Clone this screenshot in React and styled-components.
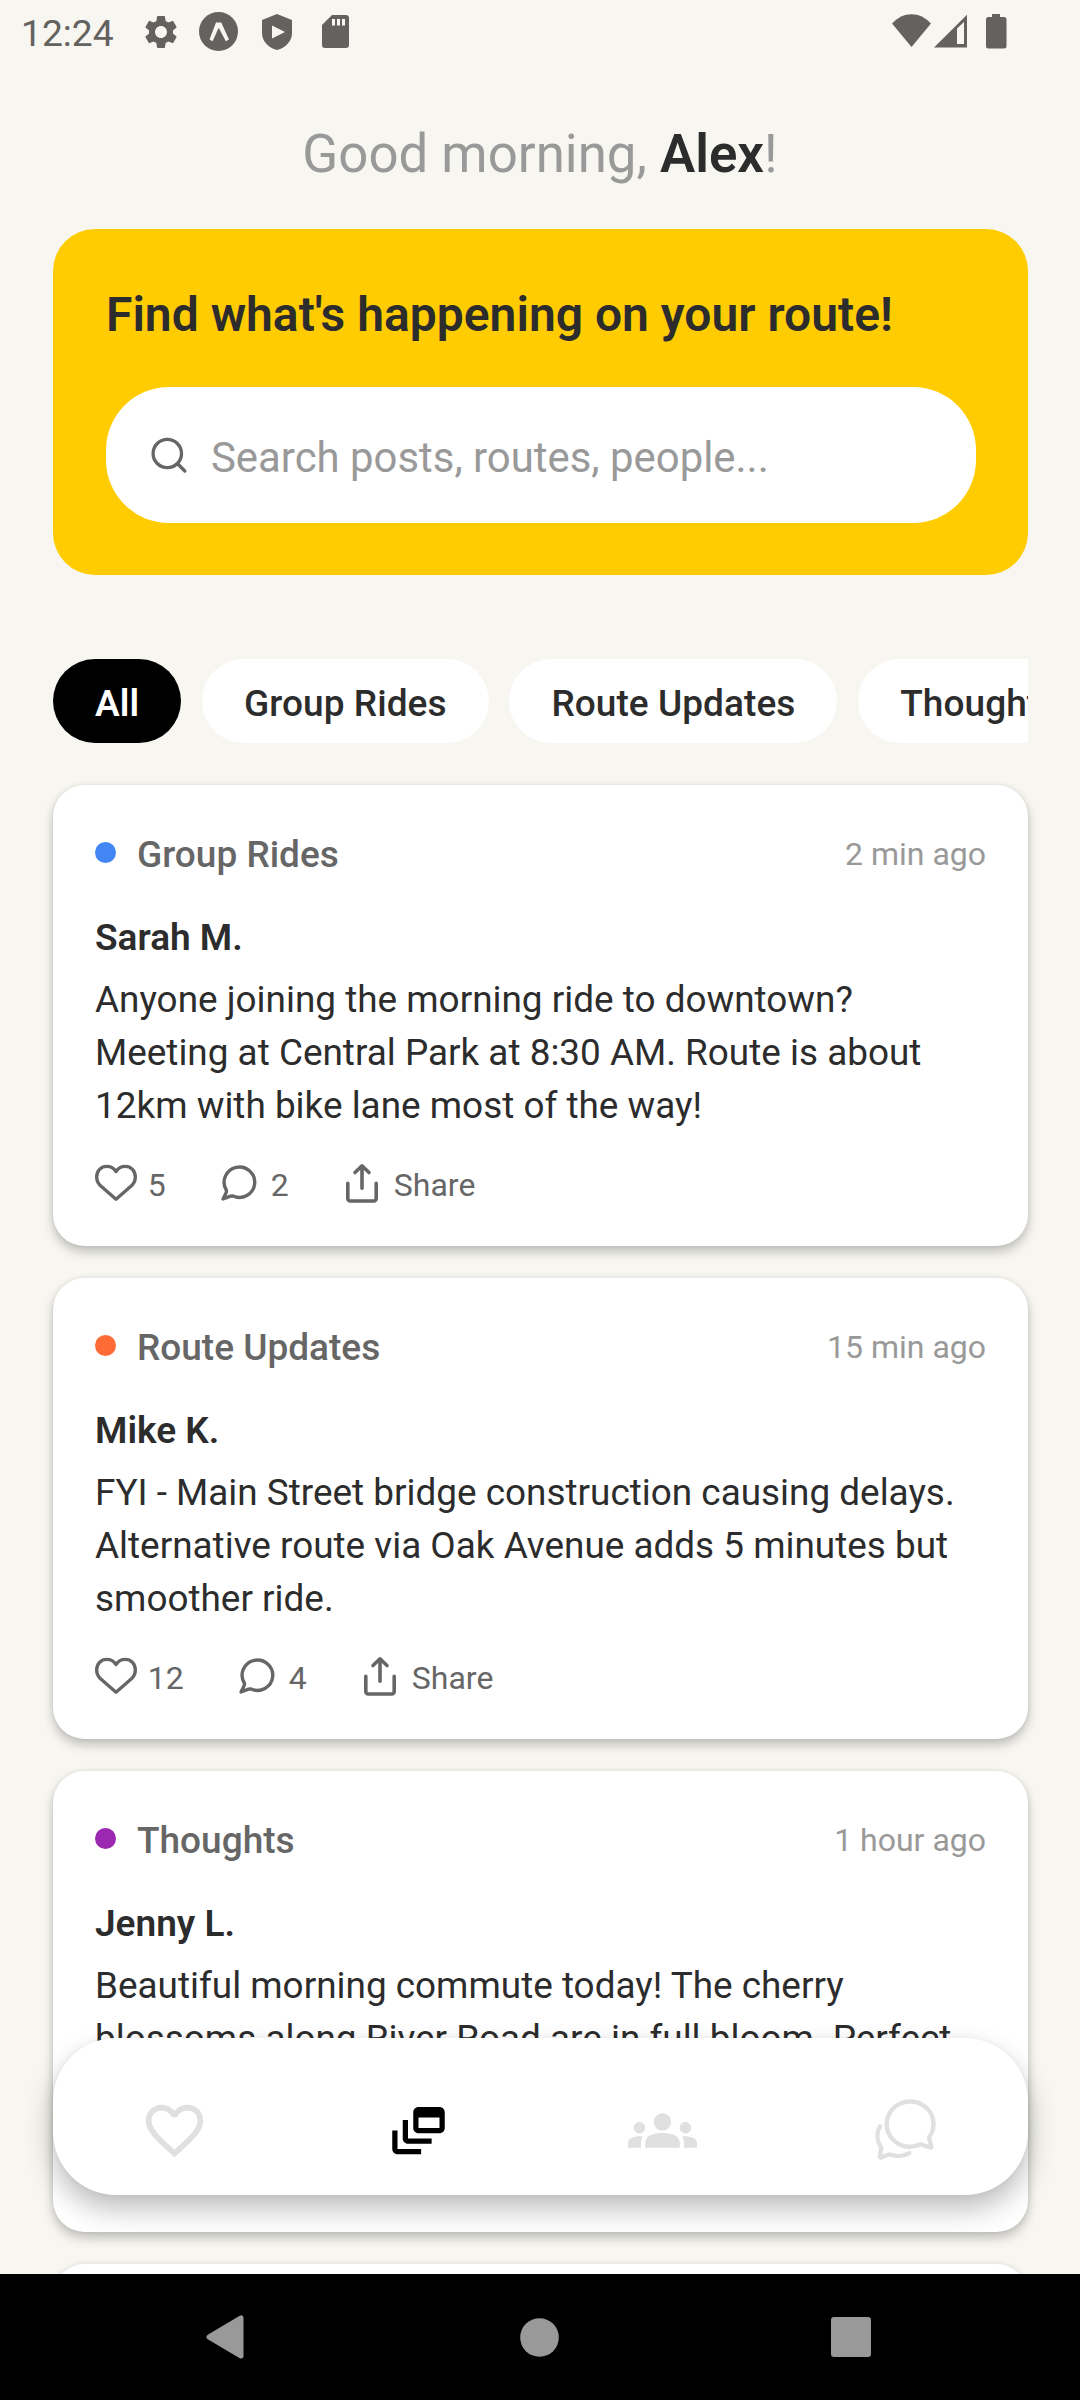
import React from "react";
import styled, { createGlobalStyle } from "styled-components";
import { MdSettings, MdDynamicFeed, MdGroups, MdFavoriteBorder } from "react-icons/md";
import { IoChatbubblesOutline } from "react-icons/io5";

const GlobalStyle = createGlobalStyle`
  * { box-sizing: border-box; }
  html, body { margin: 0; padding: 0; }
  body {
    width: 1080px;
    background: #f7f6f1;
    font-family: Roboto, "Noto Sans", sans-serif;
    -webkit-font-smoothing: antialiased;
  }
`;

const Screen = styled.div`
  position: relative;
  width: 1080px;
  height: 2400px;
  overflow: hidden;
  display: flex;
  flex-direction: column;
  background: #f7f6f1;
`;

const StatusBar = styled.header`
  flex: none;
  height: 63px;
  display: flex;
  align-items: center;
  justify-content: space-between;
  padding: 0 73px 0 21px;
  color: #63625f;
`;

const StatusGroup = styled.div`
  display: flex;
  align-items: center;
`;

const Clock = styled.span`
  width: 118px;
  font-size: 37.2px;
  line-height: 43px;
  padding-top: 4px;
`;

const StatusIcon = styled.span`
  display: flex;
  margin-left: ${(p) => p.$gap || 0}px;
  svg { display: block; }
`;

const Content = styled.main`
  flex: 1;
  min-height: 0;
  overflow: hidden;
  padding: 0 52px 0 53px;
  display: flex;
  flex-direction: column;
`;

const Greeting = styled.h1`
  flex: none;
  margin: 60px 0 44px;
  padding-right: 1px;
  font-size: 52.8px;
  line-height: 62px;
  font-weight: 400;
  text-align: center;
  color: #999;
  strong { font-weight: 600; color: #2c2c2c; }
`;

const Hero = styled.section`
  flex: none;
  height: 346px;
  padding: 52.5px 52px 52.5px 53px;
  border-radius: 42px;
  background: #ffcc02;
`;

const HeroTitle = styled.h2`
  margin: 5px 0 44.5px;
  font-size: 48px;
  line-height: 56px;
  font-weight: 600;
  color: #2c2c2c;
  white-space: nowrap;
`;

const SearchField = styled.div`
  height: 136px;
  display: flex;
  align-items: center;
  gap: 21px;
  padding: 0 42px;
  border-radius: 63px;
  background: #fff;
  color: #666;
  svg { display: block; flex: none; }
`;

const Placeholder = styled.span`
  font-size: 41.9px;
  line-height: 50px;
  padding-top: 6px;
  color: #999;
`;

const ChipRow = styled.nav`
  flex: none;
  display: flex;
  gap: 20.7px;
  margin: 84px 0 42px;
  overflow: hidden;
`;

const Chip = styled.button`
  flex: none;
  height: 84px;
  padding: 4px 42.1px 0;
  border: 0;
  border-radius: 42px;
  font: ${(p) => (p.$active ? 600 : 500)} 37px/43px Roboto, sans-serif;
  letter-spacing: 0.06px;
  color: ${(p) => (p.$active ? "#fff" : "#2c2c2c")};
  background: ${(p) => (p.$active ? "#000" : "#fff")};
`;

const Feed = styled.div`
  flex: none;
  display: flex;
  flex-direction: column;
  gap: 32px;
`;

const Card = styled.article`
  height: 461px;
  padding: 42px;
  border-radius: 31.5px;
  background: #fff;
  box-shadow: 0 6px 11px rgba(0, 0, 0, 0.22), 0 0 5px rgba(0, 0, 0, 0.08);
`;

const CardHead = styled.div`
  height: 53px;
  display: flex;
  align-items: center;
  justify-content: space-between;
`;

const Category = styled.div`
  display: flex;
  align-items: center;
  gap: 21px;
  margin-top: 2px;
  font-size: 37px;
  line-height: 43px;
  font-weight: 500;
  color: #666;
`;

const Dot = styled.span`
  width: 21px;
  height: 21px;
  margin-top: -4px;
  border-radius: 50%;
  background: ${(p) => p.$color};
`;

const Time = styled.time`
  font-size: 32px;
  line-height: 38px;
  color: #999;
`;

const Author = styled.h3`
  margin: 36px 0 14px;
  font-size: 37px;
  line-height: 43px;
  font-weight: 600;
  color: #2c2c2c;
`;

const Message = styled.p`
  margin: 0;
  height: 159px;
  font-size: 36.9px;
  line-height: 53px;
  color: #2c2c2c;
  white-space: pre;
`;

const Actions = styled.div`
  display: flex;
  align-items: center;
  gap: 52.4px;
  margin-top: 30px;
`;

const Action = styled.button`
  display: flex;
  align-items: center;
  gap: 10.7px;
  height: 42px;
  padding: 0;
  border: 0;
  background: none;
  font: 400 32px/37px Roboto, sans-serif;
  color: #666;
  svg { display: block; flex: none; }
  span { padding-top: 5px; }
`;

const TabBar = styled.nav`
  position: absolute;
  left: 53px;
  right: 52px;
  top: 2037.5px;
  height: 157.5px;
  display: grid;
  grid-template-columns: repeat(4, 1fr);
  border-radius: 63px;
  background: #fff;
  box-shadow: 0 14px 28px rgba(0, 0, 0, 0.26), 0 0 6px rgba(0, 0, 0, 0.05);
`;

const Tab = styled.button`
  display: flex;
  align-items: center;
  justify-content: center;
  padding: 28px 0 0;
  border: 0;
  background: none;
  color: ${(p) => (p.$active ? "#000" : "#e0e0e0")};
  svg { display: block; }
  &:last-child { padding: 26px 2px 0 0; }
`;

const SystemNav = styled.footer`
  flex: none;
  height: 126px;
  display: grid;
  grid-template-columns: 1fr 1fr 1fr;
  align-items: center;
  padding: 0 73px;
  background: #000;
  svg { display: block; justify-self: center; }
  svg:first-child { margin-right: 7px; }
`;

const ExpoIcon = () => (
  <svg width="39" height="39" viewBox="0 0 39 39">
    <circle cx="19.5" cy="19.5" r="19.5" fill="#63625f" />
    <path d="M17 10.500h5.200L30 27.500 26.800 29.200 19.700 15.800 13.600 29.200 10.500 27.500z" fill="#f7f6f1" />
  </svg>
);

const ShieldIcon = () => (
  <svg width="30" height="36" viewBox="0 0 30 36">
    <path d="M15 0 30 6v13c0 8-6 14.500-15 17C6 33.500 0 27 0 19V6z" fill="#63625f" />
    <path d="M10 11.500v13L23 18z" fill="#f7f6f1" />
  </svg>
);

const SdIcon = () => (
  <svg width="27" height="33" viewBox="0 0 27 33">
    <path d="M10 0h14a3 3 0 0 1 3 3v27a3 3 0 0 1-3 3H3a3 3 0 0 1-3-3V10z" fill="#63625f" />
    <path d="M10 4h3v6.500h-3zM15 4h3v6.500h-3zM20 4h3v6.500h-3z" fill="#f7f6f1" />
  </svg>
);

const SignalIcons = () => (
  <svg width="115" height="35" viewBox="0 0 115 35">
    <g fill="#63625f">
      <path d="M0 9.500C11-3 28-3 39 9.500L19.500 33z" />
      <path fillRule="evenodd" d="M42 33.500 75 .8v32.700zM65 14.500v15.500h7V8z" />
      <path d="M100 0h8v3h4a2.500 2.500 0 0 1 2.500 2.500V32a2.500 2.500 0 0 1-2.500 2.500H96.500A2.500 2.500 0 0 1 94 32V5.500A2.500 2.500 0 0 1 96.500 3h3.500z" />
    </g>
  </svg>
);

const SearchIcon = () => (
  <svg width="42" height="42" viewBox="0 0 42 42" fill="none" stroke="currentColor" strokeWidth="3.300" strokeLinecap="round">
    <circle cx="19.300" cy="19.500" r="14.200" />
    <path d="M29.800 30l7 7" />
  </svg>
);

const HeartIcon = () => (
  <svg width="42" height="42" viewBox="0 0 42 42" fill="none" stroke="currentColor" strokeWidth="3.300" strokeLinejoin="round">
    <path d="M21 37.200 5 23.300A12 12 0 0 1 1.650 15C1.650 8.700 6 4.300 11.800 4.300c3.800 0 7 1.800 9.200 5.200 2.200-3.400 5.400-5.200 9.200-5.200 5.800 0 10.150 4.400 10.150 10.700A12 12 0 0 1 37 23.300z" />
  </svg>
);

const CommentIcon = () => (
  <svg width="42" height="42" viewBox="0 0 42 42" fill="none" stroke="currentColor" strokeWidth="3.400" strokeLinejoin="round">
    <path d="M8.300 28A15.300 15.200 0 1 1 15 34Q14 33.800 12.500 34.200L5 37 7.800 31.500Q8.800 29.500 8.300 28z" />
  </svg>
);

const ShareIcon = () => (
  <svg width="42" height="42" viewBox="0 0 42 42" fill="none" stroke="currentColor" strokeWidth="3.600" strokeLinecap="round" strokeLinejoin="round">
    <path d="M6.800 21.200v15.300a2.500 2.500 0 0 0 2.500 2.500h23.400a2.500 2.500 0 0 0 2.500-2.500V21.200M21 26.200V4M14 10.500 21 3.800l7 6.700" />
  </svg>
);

const chips = ["All", "Group Rides", "Route Updates", "Thoughts"];

const posts = [
  {
    category: "Group Rides", color: "#4285f4", time: "2 min ago", author: "Sarah M.", likes: 5, comments: 2,
    text: "Anyone joining the morning ride to downtown?\nMeeting at Central Park at 8:30 AM. Route is about\n12km with bike lane most of the way!",
  },
  {
    category: "Route Updates", color: "#ff6b35", time: "15 min ago", author: "Mike K.", likes: 12, comments: 4,
    text: "FYI - Main Street bridge construction causing delays.\nAlternative route via Oak Avenue adds 5 minutes but\nsmoother ride.",
  },
  {
    category: "Thoughts", color: "#9c27b0", time: "1 hour ago", author: "Jenny L.",
    text: "Beautiful morning commute today! The cherry\nblossoms along River Road are in full bloom. Perfect",
  },
];

function Post({ post }) {
  return (
    <Card>
      <CardHead>
        <Category><Dot $color={post.color} />{post.category}</Category>
        <Time>{post.time}</Time>
      </CardHead>
      <Author>{post.author}</Author>
      <Message>{post.text}</Message>
      {post.likes && (
        <Actions>
          <Action><HeartIcon /><span>{post.likes}</span></Action>
          <Action><CommentIcon /><span>{post.comments}</span></Action>
          <Action><ShareIcon /><span>Share</span></Action>
        </Actions>
      )}
    </Card>
  );
}

export default function App() {
  return (
    <>
      <GlobalStyle />
      <Screen>
        <StatusBar>
          <StatusGroup>
            <Clock>12:24</Clock>
            <StatusIcon $gap={2}><MdSettings size={40} /></StatusIcon>
            <StatusIcon $gap={18}><ExpoIcon /></StatusIcon>
            <StatusIcon $gap={24}><ShieldIcon /></StatusIcon>
            <StatusIcon $gap={30}><SdIcon /></StatusIcon>
          </StatusGroup>
          <SignalIcons />
        </StatusBar>
        <Content>
          <Greeting>Good morning, <strong>Alex</strong>!</Greeting>
          <Hero>
            <HeroTitle>Find what's happening on your route!</HeroTitle>
            <SearchField>
              <SearchIcon />
              <Placeholder>Search posts, routes, people...</Placeholder>
            </SearchField>
          </Hero>
          <ChipRow>
            {chips.map((c, i) => <Chip key={c} $active={i === 0}>{c}</Chip>)}
          </ChipRow>
          <Feed>
            {posts.map((p) => <Post key={p.author} post={p} />)}
            <Card />
          </Feed>
        </Content>
        <SystemNav>
          <svg width="38" height="44" viewBox="0 0 38 44"><path d="M35 3v38L3 22z" fill="#999" stroke="#999" strokeWidth="5" strokeLinejoin="round" /></svg>
          <svg width="39" height="39" viewBox="0 0 39 39"><circle cx="19.500" cy="19.500" r="19.300" fill="#999" /></svg>
          <svg width="40" height="40" viewBox="0 0 40 40"><rect width="40" height="40" rx="3" fill="#999" /></svg>
        </SystemNav>
        <TabBar>
          <Tab><MdFavoriteBorder size={69} /></Tab>
          <Tab $active><MdDynamicFeed size={63} /></Tab>
          <Tab><MdGroups size={69} /></Tab>
          <Tab><IoChatbubblesOutline size={69} /></Tab>
        </TabBar>
      </Screen>
    </>
  );
}
